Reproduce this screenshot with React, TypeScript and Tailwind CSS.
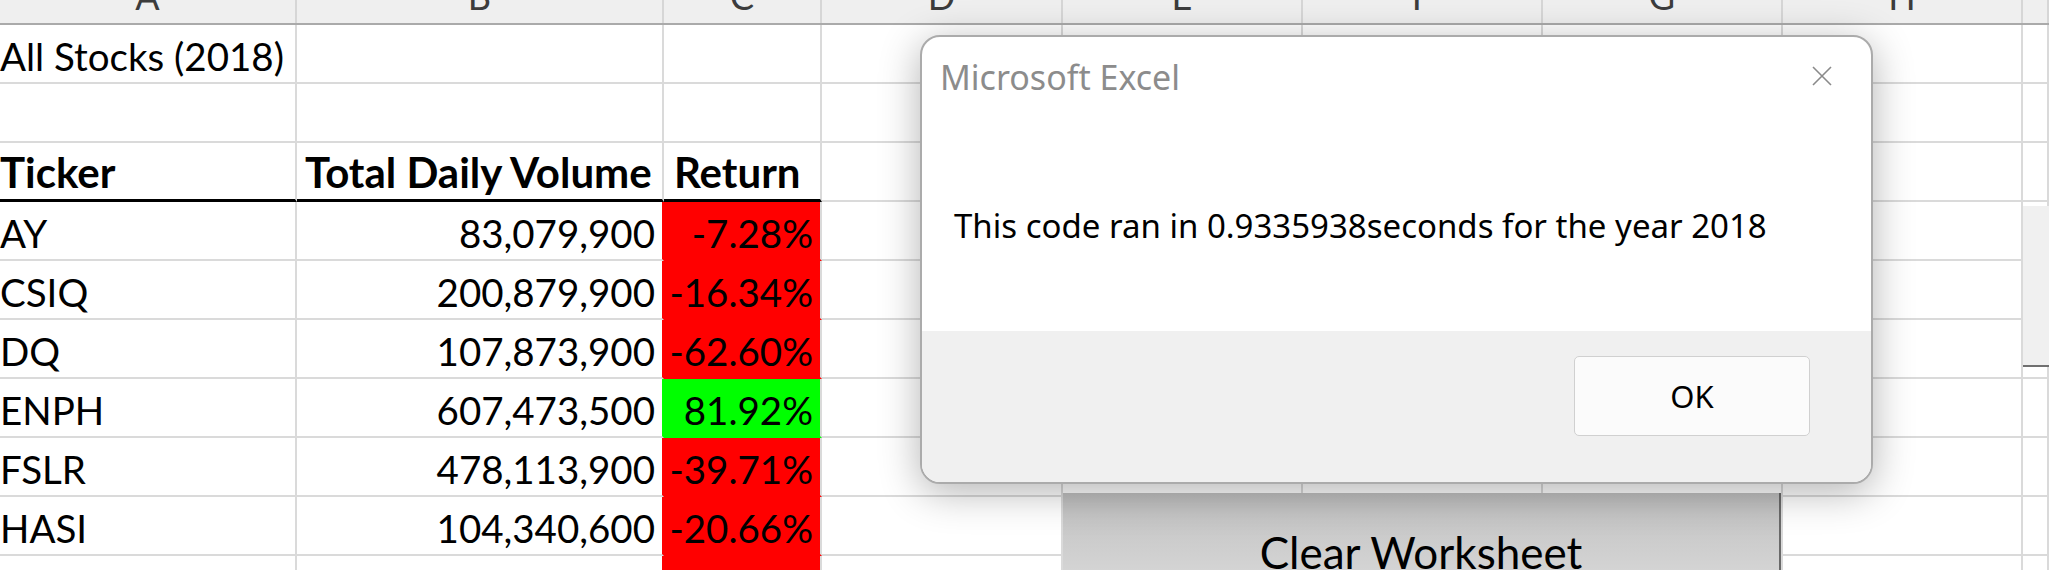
import clsx from 'clsx'

const colW = ['w-[297px]', 'w-[367px]', 'w-[158px]', 'w-[241px]', 'w-[240px]', 'w-[240px]', 'w-[240px]', 'w-[240px]', 'flex-1']
const letters = ['A', 'B', 'C', 'D', 'E', 'F', 'G', 'H', '']

type Row = { a?: string; b?: string; c?: string; fill?: 'red' | 'green'; head?: boolean }

const rows: Row[] = [
    { a: 'All Stocks (2018)' },
    {},
    { a: 'Ticker', b: 'Total Daily Volume', c: 'Return', head: true },
    { a: 'AY', b: '83,079,900', c: '-7.28%', fill: 'red' },
    { a: 'CSIQ', b: '200,879,900', c: '-16.34%', fill: 'red' },
    { a: 'DQ', b: '107,873,900', c: '-62.60%', fill: 'red' },
    { a: 'ENPH', b: '607,473,500', c: '81.92%', fill: 'green' },
    { a: 'FSLR', b: '478,113,900', c: '-39.71%', fill: 'red' },
    { a: 'HASI', b: '104,340,600', c: '-20.66%', fill: 'red' },
    { fill: 'red' },
]

function HeaderRow() {
    return (
        <div className="flex h-[25px] border-b-2 border-[#aaaaaa] bg-[#efefef]">
            {letters.map((l, i) => (
                <div
                    key={i}
                    className={clsx(colW[i], 'shrink-0 overflow-hidden border-r-2 border-[#d6d6d6] text-center text-[36px] leading-none text-[#3c3c3c]')}
                >
                    <div className="-mt-[22px]">{l}</div>
                </div>
            ))}
        </div>
    )
}

function SheetRow({ row }: { row: Row }) {
    const fillBg = row.fill === 'red' ? 'bg-[#ff0000]' : row.fill === 'green' ? 'bg-[#00ff00]' : ''
    const bottom = row.head ? 'border-b-[3px] border-b-black' : 'border-b-2'
    const txt = row.head ? 'text-[42px] font-bold leading-[59px]' : 'text-[38.5px] leading-[63px]'

    return (
        <div className="flex h-[59px] whitespace-nowrap text-black">
            {/* A */}
            <div className={clsx(colW[0], 'shrink-0 border-r-2 border-[#dadada]', bottom, txt)}>
                {row.a}
            </div>
            {/* B */}
            <div
                className={clsx(
                    colW[1],
                    'shrink-0 border-r-2 border-[#dadada]',
                    bottom,
                    txt,
                    row.head ? 'pl-[8px]' : 'pr-[7px] text-right',
                    row.fill === 'red' && 'border-r-[#ff0000]',
                    row.fill === 'green' && 'border-r-[#00ff00]'
                )}
            >
                {row.b}
            </div>
            {/* C */}
            <div
                className={clsx(
                    colW[2],
                    'shrink-0 border-r-2 border-[#dadada]',
                    bottom,
                    txt,
                    fillBg,
                    row.fill === 'red' && 'border-b-[#ff0000]',
                    row.fill === 'green' && 'border-b-[#00ff00]',
                    row.head ? 'pl-[10px]' : 'pr-[7px] text-right'
                )}
            >
                {row.c}
            </div>
            {colW.slice(3).map((w, i) => (
                <div key={i} className={clsx(w, 'shrink-0 border-r-2 border-b-2 border-[#dadada]')} />
            ))}
        </div>
    )
}

function MsgBox() {
    return (
        <div className="absolute left-[920px] top-[35px] flex h-[449px] w-[953px] flex-col overflow-hidden rounded-[20px] border-2 border-[#ababab] bg-white font-[family-name:'Noto_Sans',sans-serif] shadow-[0_8px_40px_rgba(0,0,0,0.3)]">
            <div className="relative h-[294px] pt-[20px]">
                <p className="pl-[18px] text-[34px] leading-[40px] text-[#8c8c8c]">Microsoft Excel</p>
                <p className="mt-[109px] pl-[32px] text-[33px] leading-[40px] text-black">
                    This code ran in 0.9335938seconds for the year 2018
                </p>
                <svg className="absolute right-[39px] top-[29px] h-[20px] w-[20px]" viewBox="0 0 20 20">
                    <path d="M1 1 L19 19 M19 1 L1 19" stroke="#8a8a8a" strokeWidth="1.6" fill="none" />
                </svg>
            </div>
            <div className="flex flex-1 justify-end bg-[#f0f0f0] pr-[61px] pt-[25px]">
                <button className="h-[80px] w-[236px] rounded-[5px] border border-[#d0d0d0] bg-[#fbfbfb] text-[31px] text-black">
                    OK
                </button>
            </div>
        </div>
    )
}

export default function App() {
    return (
        <div className="relative h-[570px] w-[2049px] overflow-hidden bg-white font-[family-name:Lato,sans-serif]">
            <HeaderRow />
            {rows.map((r, i) => (
                <SheetRow key={i} row={r} />
            ))}

            {/* form buttons on the sheet */}
            <div className="absolute left-[1063px] top-[493px] h-[100px] w-[718px] border-r-2 border-[#6a6a6a] bg-gradient-to-b from-[#c0c0c0] to-[#dadada] pt-[37px] text-center text-[44px] leading-none text-black">
                Clear Worksheet
            </div>
            <div className="absolute left-[2023px] top-[206px] h-[161px] w-[30px] border-b-2 border-[#707070] bg-[#f0f0f0]" />

            <MsgBox />
        </div>
    )
}
